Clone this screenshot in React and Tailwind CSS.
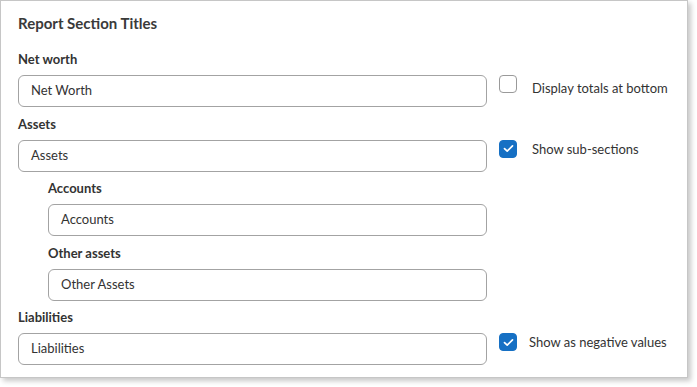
export default function App() {
  const Check = ({ checked }) => (
    <div
      className={
        "w-[18px] h-[18px] rounded-[4px] flex items-center justify-center shrink-0 " +
        (checked ? "bg-[#1670c4] border border-[#1670c4]" : "bg-white border border-[#9a9a9a]")
      }
    >
      {checked && (
        <svg width="11" height="9" viewBox="0 0 11 9" fill="none">
          <path d="M1.5 4.6 L4.2 7.2 L9.5 1.8" stroke="white" strokeWidth="1.7" strokeLinecap="round" strokeLinejoin="round" />
        </svg>
      )}
    </div>
  );

  const Field = ({ label, value, indent, right, last }) => (
    <div className={"flex flex-col " + (indent ? "pl-[30px] " : "") + (last ? "" : "mb-[8.5px]")}>
      <div className="h-[16px] leading-[16px] text-[13px] font-bold text-[#333] mb-[8px]">{label}</div>
      <div className="flex items-start">
        <div className="flex-1 h-[32px] rounded-[6px] border border-[#a3a3a3] bg-white flex items-center px-[12px] text-[13px] text-[#333]">
          {value}
        </div>
        <div className="w-[199px] pl-[12px]">{right}</div>
      </div>
    </div>
  );

  return (
    <div className="w-[697px] h-[387px] bg-white" style={{ fontFamily: "Lato, 'Open Sans', sans-serif" }}>
      <div className="w-[688px] h-[378px] border border-[#c6c6c6] bg-white shadow-[3px_3px_5px_rgba(0,0,0,0.22)] pl-[17px] pr-[1px] pt-[12px]">
        <div className="text-[15px] font-bold text-[#3a3a3a] leading-[20px] mb-[18px]">Report Section Titles</div>
        <Field
          label="Net worth"
          value="Net Worth"
          right={
            <div className="flex items-start">
              <Check />
              <span className="ml-[15px] mt-[5px] text-[13px] text-[#333] leading-[16px]">Display totals at bottom</span>
            </div>
          }
        />
        <Field
          label="Assets"
          value="Assets"
          right={
            <div className="flex items-center">
              <Check checked />
              <span className="ml-[15px] text-[13px] text-[#333] leading-[16px]">Show sub-sections</span>
            </div>
          }
        />
        <Field label="Accounts" value="Accounts" indent />
        <Field label="Other assets" value="Other Assets" indent />
        <Field
          label="Liabilities"
          value="Liabilities"
          last
          right={
            <div className="flex items-center">
              <Check checked />
              <span className="ml-[12px] text-[13px] text-[#333] leading-[16px]">Show as negative values</span>
            </div>
          }
        />
      </div>
    </div>
  );
}
